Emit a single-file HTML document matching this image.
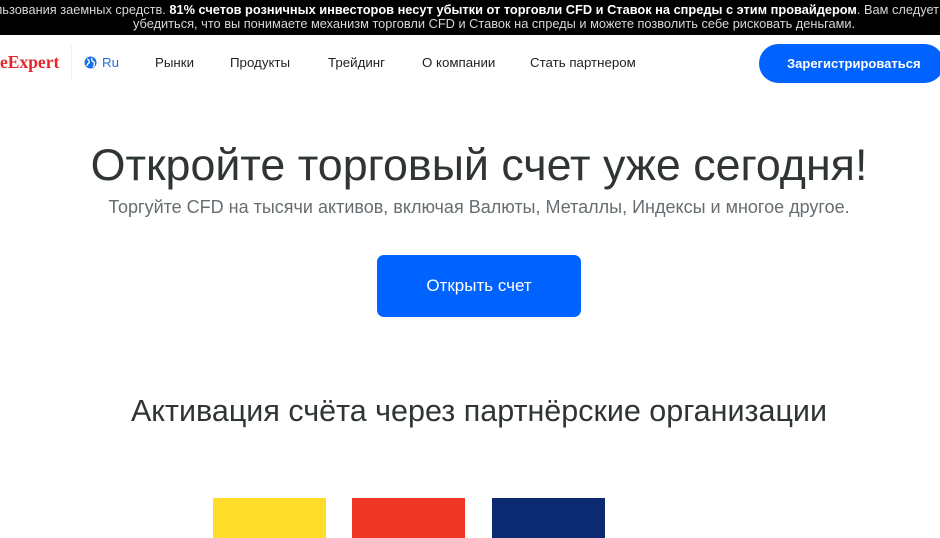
<!DOCTYPE html>
<html><head><meta charset="utf-8"><style>
*{margin:0;padding:0;box-sizing:border-box}
body{width:940px;height:530px;overflow:hidden;background:#fff;font-family:"Liberation Sans",sans-serif;position:relative}
.ban{position:absolute;left:0;top:0;width:940px;height:35px;background:#000;overflow:hidden}
.ban div{position:absolute;white-space:nowrap;color:#d8d8d8;font-size:12.8px}
.ban b{color:#fff}
.nav{position:absolute;top:35px;left:0;width:940px;height:56px}
.a{position:absolute;font-size:13.3px;color:#222;top:20px}
h1{position:absolute;top:140px;left:0;width:958px;text-align:center;font-weight:normal;font-size:44.8px;color:#2f3435}
.sub{position:absolute;top:197px;left:0;width:958px;text-align:center;font-size:18px;color:#666e72}
.btn{position:absolute;left:377px;top:255px;width:204px;height:62px;background:#0062ff;border-radius:7px;color:#fff;font-size:17px;text-align:center;line-height:62px}
h2{position:absolute;top:394px;left:0;width:958px;text-align:center;font-weight:normal;font-size:30.5px;color:#2f3435}
.box{position:absolute;top:498px;width:113px;height:40px}
</style></head><body>
<div class="ban">
<div style="top:2px;right:1px">возможностью быстрой потери денег вследствие использования заемных средств. <b>81% счетов розничных инвесторов несут убытки от торговли CFD и Ставок на спреды с этим провайдером</b>. Вам следует</div>
<div style="top:16px;left:133px">убедиться, что вы понимаете механизм торговли CFD и Ставок на спреды и можете позволить себе рисковать деньгами.</div>
</div>
<div class="nav">
<div style="position:absolute;left:0;top:17px;font-family:'Liberation Serif',serif;color:#e3262c;font-size:17.5px;font-weight:bold">eExpert</div>
<div style="position:absolute;left:71px;top:10px;width:1px;height:36px;background:#eef0f3"></div>
<svg style="position:absolute;left:84px;top:21px" width="13" height="13" viewBox="0 0 13 13"><circle cx="6.5" cy="6.5" r="6" fill="#1a6fe8"/><path d="M3 3 Q6 4 5 7 Q3 8 3 10 M8 2 Q7 5 10 6 Q11 9 9 11" stroke="#fff" stroke-width="1.3" fill="none"/></svg>
<div class="a" style="left:102px;color:#1a6fe8">Ru</div>
<div class="a" style="left:155px">Рынки</div>
<div class="a" style="left:230px">Продукты</div>
<div class="a" style="left:328px">Трейдинг</div>
<div class="a" style="left:422px">О компании</div>
<div class="a" style="left:530px">Стать партнером</div>
<div style="position:absolute;left:759px;top:9px;width:185px;height:39px;border-radius:20px;background:#0062ff;color:#fff;font-size:13px;font-weight:bold;line-height:39px;padding-left:28px">Зарегистрироваться</div>
</div>
<h1>Откройте торговый счет уже сегодня!</h1>
<div class="sub">Торгуйте CFD на тысячи активов, включая Валюты, Металлы, Индексы и многое другое.</div>
<div class="btn">Открыть счет</div>
<h2>Активация счёта через партнёрские организации</h2>
<div class="box" style="left:213px;background:#ffdb2a"></div>
<div class="box" style="left:352px;background:#ef3524"></div>
<div class="box" style="left:492px;background:#0b2a72"></div>
</body></html>
